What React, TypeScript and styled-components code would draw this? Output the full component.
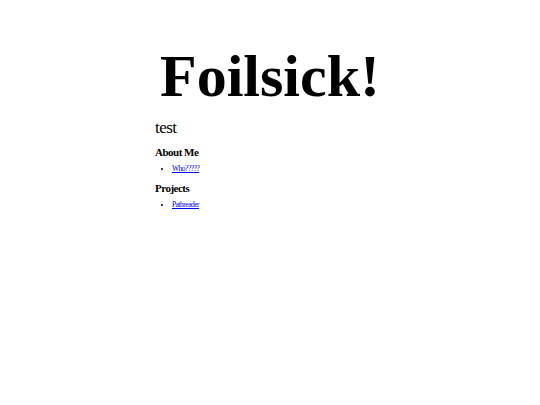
import React from "react";
import styled, { createGlobalStyle } from "styled-components";

const Global = createGlobalStyle`
  html, body { margin: 0; padding: 0; background: #fff; }
  body { font-family: "Liberation Serif", "Times New Roman", serif; color: #000; }
`;

const Page = styled.div`
  width: 230px;
  margin: 0 auto;
  padding-top: 43px;
`;

const Title = styled.h1`
  margin: 0 0 9px;
  text-align: center;
  font-size: 60px;
  font-weight: bold;
  line-height: 66px;
`;

const Tagline = styled.p`
  margin: 0;
  font-size: 17px;
  letter-spacing: -0.55px;
  line-height: 20px;
`;

const Heading = styled.h3`
  margin: 7px 0 0;
  font-size: 11px;
  letter-spacing: -0.5px;
  font-weight: bold;
  line-height: 14px;
`;

const List = styled.ul`
  margin: 5px 0 4px;
  padding-left: 17px;
  font-size: 7.5px;
  letter-spacing: -0.5px;
  line-height: 10px;
`;

const Link = styled.a`
  color: #0000ee;
  text-decoration: underline;
`;

export default function App() {
  return (
    <>
      <Global />
      <Page>
        <Title>Foilsick!</Title>
        <Tagline>test</Tagline>
        <Heading>About Me</Heading>
        <List>
          <li><Link href="#">Who?????</Link></li>
        </List>
        <Heading>Projects</Heading>
        <List>
          <li><Link href="#">Pathreader</Link></li>
        </List>
      </Page>
    </>
  );
}
